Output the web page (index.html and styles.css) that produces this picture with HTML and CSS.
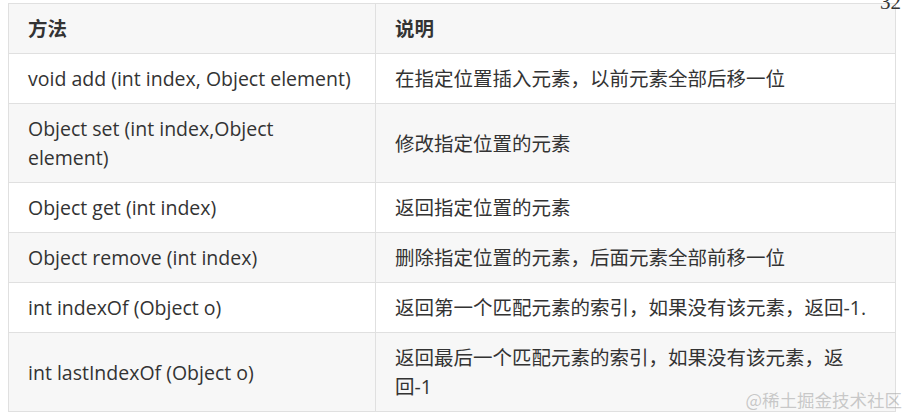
FILE: index.html
```html
<!DOCTYPE html>
<html lang="zh-CN">
<head>
<meta charset="utf-8">
<title>List methods</title>
<link rel="stylesheet" href="styles.css">
</head>
<body>
<div class="page">
  <span class="page-num">32</span>
  <table class="methods">
    <thead>
      <tr><th class="c1">方法</th><th>说明</th></tr>
    </thead>
    <tbody>
      <tr><td>void add (int index, Object element)</td><td>在指定位置插入元素，以前元素全部后移一位</td></tr>
      <tr><td>Object set (int index,Object element)</td><td>修改指定位置的元素</td></tr>
      <tr><td>Object get (int index)</td><td>返回指定位置的元素</td></tr>
      <tr><td>Object remove (int index)</td><td>删除指定位置的元素，后面元素全部前移一位</td></tr>
      <tr><td>int indexOf (Object o)</td><td>返回第一个匹配元素的索引，如果没有该元素，返回-1.</td></tr>
      <tr><td>int lastIndexOf (Object o)</td><td>返回最后一个匹配元素的索引，如果没有该元素，返回-1</td></tr>
    </tbody>
  </table>
  <span class="watermark">@稀土掘金技术社区</span>
</div>
</body>
</html>
```
FILE: styles.css
```css
html, body {
  margin: 0;
  padding: 0;
  background: #ffffff;
}
body {
  padding: 3px 0 0 8px;
  font-family: "Open Sans", "Noto Sans CJK SC", sans-serif;
  color: #333333;
}
.page {
  position: relative;
  width: 888px;
}
.methods {
  width: 888px;
  border-collapse: collapse;
  table-layout: fixed;
  font-size: 19.5px;
  line-height: 29px;
}
.methods th,
.methods td {
  border: 1px solid #e0e0e0;
  padding: 10px 19px 10px 19px;
  text-align: left;
  vertical-align: middle;
}
.methods tr > :first-child {
  padding-right: 22px;
}
.methods th {
  font-weight: 700;
  background: #f7f7f7;
}
.methods .c1 {
  width: 325px;
}
.methods tbody tr:nth-child(even) td {
  background: #f7f7f7;
}
.methods tbody tr:nth-child(odd) td {
  background: #ffffff;
}
.page-num {
  position: absolute;
  right: -5px;
  top: -13px;
  font-family: "Liberation Serif", serif;
  font-size: 21px;
  color: #333333;
}
.watermark {
  position: absolute;
  right: -6px;
  bottom: 0;
  font-family: "Noto Sans CJK SC", sans-serif;
  font-size: 17.5px;
  line-height: 24px;
  color: rgba(160, 160, 160, 0.55);
}
```
